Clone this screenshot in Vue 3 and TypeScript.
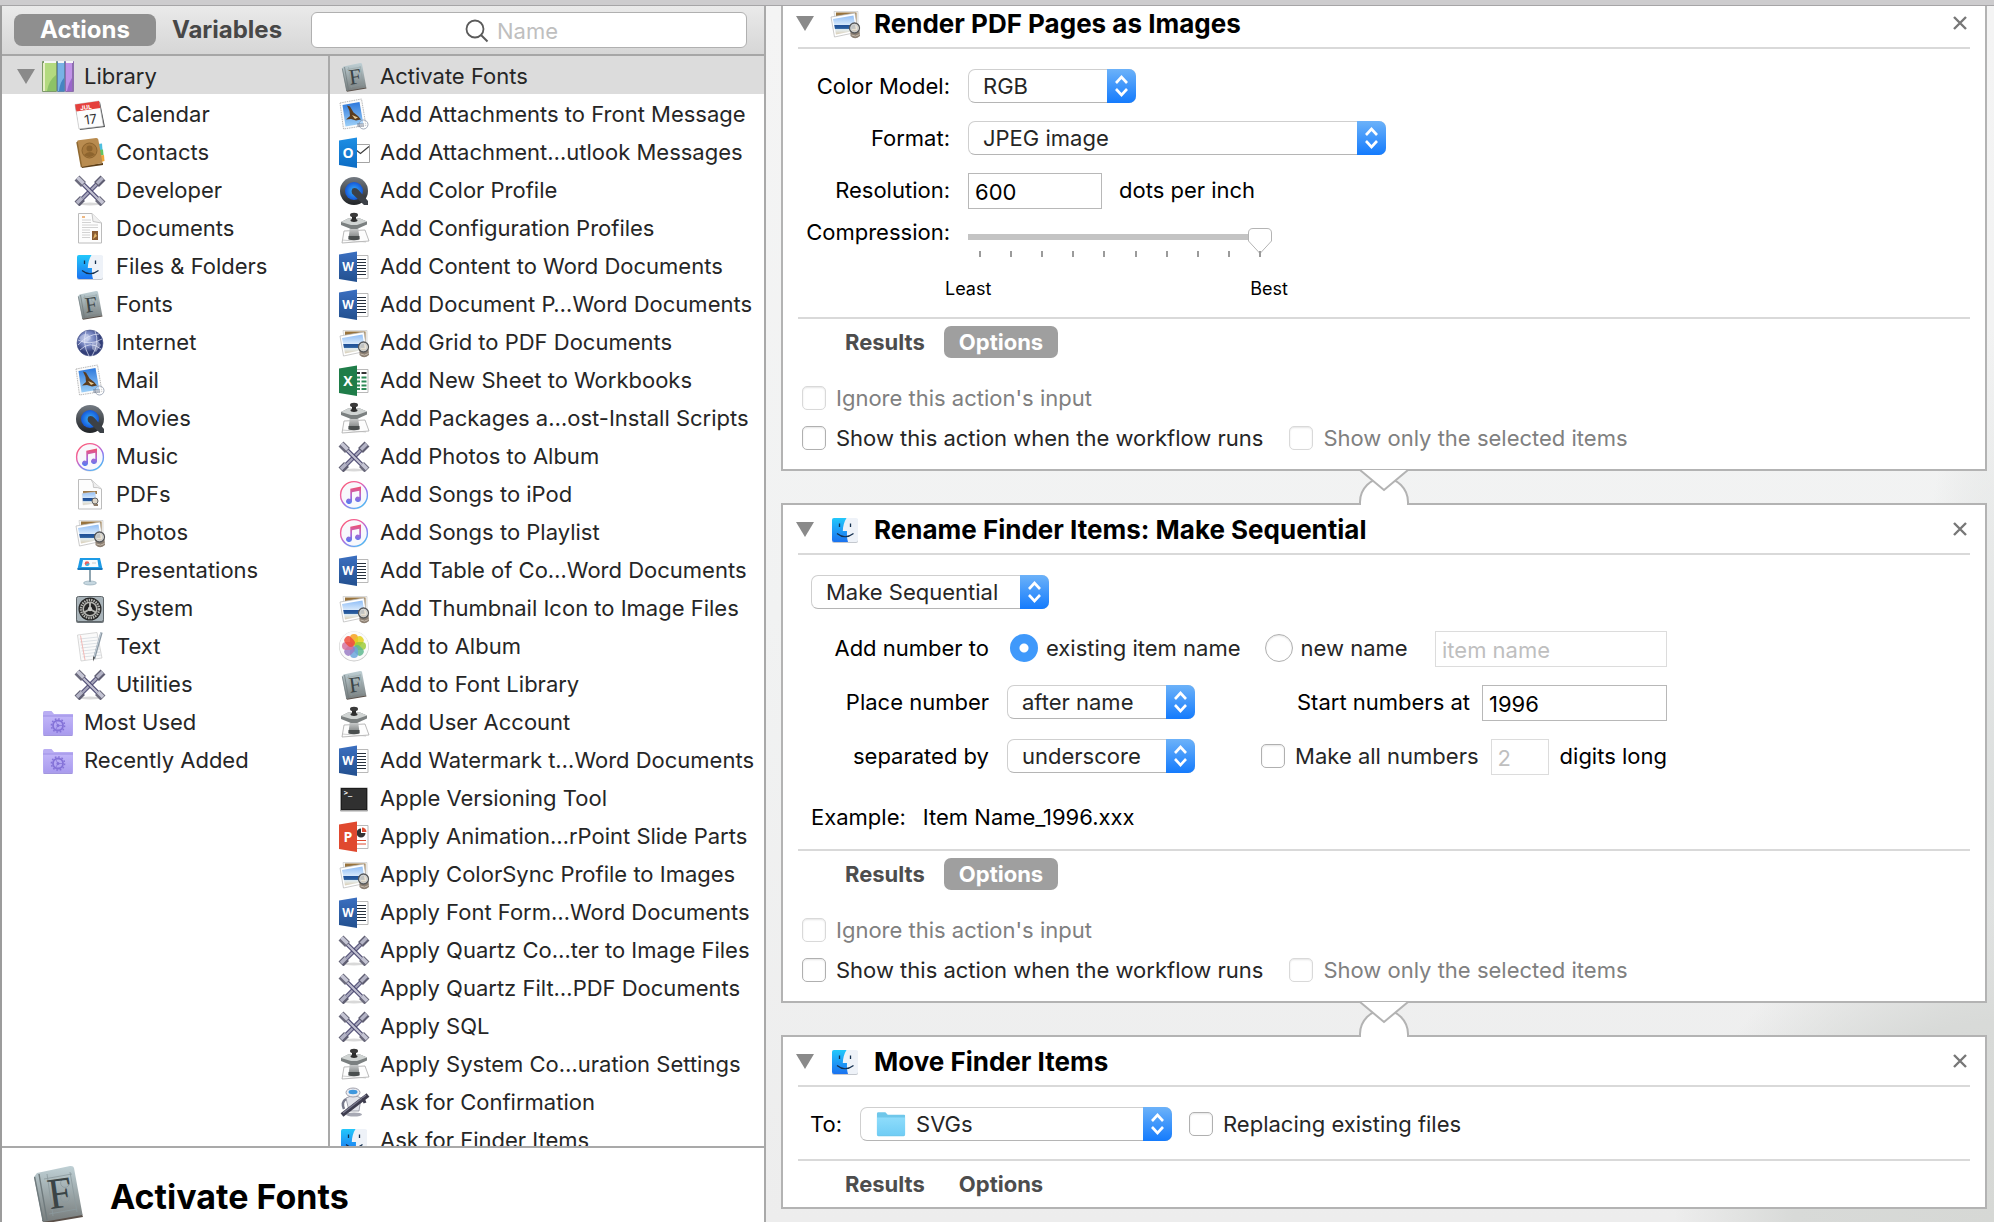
<script setup lang="ts">
import { h, ref } from 'vue'

interface Entry {
  icon: string
  label: string
}

interface Glyph {
  text: string
  x: number
  y: number
  size: number
  family: string
  weight: number
  fill: string
  tilt: number
}

const office = 'Open Sans, sans-serif'

const glyphs: Record<string, Glyph[]> = {
  calendar: [
    { text: 'JUL', x: 13, y: 11, size: 6, family: 'Inter, sans-serif', weight: 700, fill: '#fff', tilt: -8 },
    { text: '17', x: 16, y: 26, size: 13, family: 'Inter, sans-serif', weight: 400, fill: '#333', tilt: -8 },
  ],
  fontbook: [{ text: 'F', x: 17, y: 24, size: 22, family: 'Liberation Serif, serif', weight: 400, fill: '#3b4446', tilt: -8 }],
  outlook: [{ text: 'O', x: 10, y: 22, size: 14, family: office, weight: 700, fill: '#fff', tilt: 0 }],
  word: [{ text: 'W', x: 10, y: 21, size: 12, family: office, weight: 700, fill: '#fff', tilt: 0 }],
  excel: [{ text: 'X', x: 10, y: 22, size: 14, family: office, weight: 700, fill: '#fff', tilt: 0 }],
  powerpoint: [{ text: 'P', x: 10, y: 22, size: 14, family: office, weight: 700, fill: '#fff', tilt: 0 }],
  terminal: [{ text: '>_', x: 10, y: 13, size: 7, family: 'DejaVu Sans Mono, monospace', weight: 700, fill: '#fff', tilt: 0 }],
}

// Artwork comes from the sprite; lettering is laid over it per icon.
const AppIcon = (props: { name: string }) =>
  h('svg', { viewBox: '0 0 32 32', 'aria-hidden': 'true' }, [
    h('use', { href: `#i-${props.name}`, width: 32, height: 32 }),
    ...(glyphs[props.name] ?? []).map((g) =>
      h(
        'text',
        {
          x: g.x,
          y: g.y,
          'font-size': g.size,
          'font-family': g.family,
          'font-weight': g.weight,
          fill: g.fill,
          'text-anchor': 'middle',
          transform: `rotate(${g.tilt} 16 17)`,
        },
        g.text,
      ),
    ),
  ])
AppIcon.props = ['name']

const categories: Entry[] = [
  { icon: 'calendar', label: 'Calendar' },
  { icon: 'contacts', label: 'Contacts' },
  { icon: 'tools', label: 'Developer' },
  { icon: 'document', label: 'Documents' },
  { icon: 'finder', label: 'Files & Folders' },
  { icon: 'fontbook', label: 'Fonts' },
  { icon: 'globe', label: 'Internet' },
  { icon: 'mail', label: 'Mail' },
  { icon: 'quicktime', label: 'Movies' },
  { icon: 'music', label: 'Music' },
  { icon: 'pdf', label: 'PDFs' },
  { icon: 'preview', label: 'Photos' },
  { icon: 'keynote', label: 'Presentations' },
  { icon: 'system', label: 'System' },
  { icon: 'text', label: 'Text' },
  { icon: 'tools', label: 'Utilities' },
]

const smartGroups: Entry[] = [
  { icon: 'smart', label: 'Most Used' },
  { icon: 'smart', label: 'Recently Added' },
]

const actions: Entry[] = [
  { icon: 'fontbook', label: 'Activate Fonts' },
  { icon: 'mail', label: 'Add Attachments to Front Message' },
  { icon: 'outlook', label: 'Add Attachment…utlook Messages' },
  { icon: 'quicktime', label: 'Add Color Profile' },
  { icon: 'stamp', label: 'Add Configuration Profiles' },
  { icon: 'word', label: 'Add Content to Word Documents' },
  { icon: 'word', label: 'Add Document P…Word Documents' },
  { icon: 'preview', label: 'Add Grid to PDF Documents' },
  { icon: 'excel', label: 'Add New Sheet to Workbooks' },
  { icon: 'stamp', label: 'Add Packages a…ost-Install Scripts' },
  { icon: 'tools', label: 'Add Photos to Album' },
  { icon: 'music', label: 'Add Songs to iPod' },
  { icon: 'music', label: 'Add Songs to Playlist' },
  { icon: 'word', label: 'Add Table of Co…Word Documents' },
  { icon: 'preview', label: 'Add Thumbnail Icon to Image Files' },
  { icon: 'photos', label: 'Add to Album' },
  { icon: 'fontbook', label: 'Add to Font Library' },
  { icon: 'stamp', label: 'Add User Account' },
  { icon: 'word', label: 'Add Watermark t…Word Documents' },
  { icon: 'terminal', label: 'Apple Versioning Tool' },
  { icon: 'powerpoint', label: 'Apply Animation…rPoint Slide Parts' },
  { icon: 'preview', label: 'Apply ColorSync Profile to Images' },
  { icon: 'word', label: 'Apply Font Form…Word Documents' },
  { icon: 'tools', label: 'Apply Quartz Co…ter to Image Files' },
  { icon: 'tools', label: 'Apply Quartz Filt…PDF Documents' },
  { icon: 'tools', label: 'Apply SQL' },
  { icon: 'stamp', label: 'Apply System Co…uration Settings' },
  { icon: 'automator', label: 'Ask for Confirmation' },
  { icon: 'finder', label: 'Ask for Finder Items' },
]

const petals = [
  { angle: 0, color: '#f6a21d' },
  { angle: 45, color: '#e3d11f' },
  { angle: 90, color: '#9ccb3b' },
  { angle: 135, color: '#5fb98f' },
  { angle: 180, color: '#6ba6dc' },
  { angle: 225, color: '#9a7cc4' },
  { angle: 270, color: '#d5729f' },
  { angle: 315, color: '#ee4d3c' },
]

const selectedAction = ref(0)
const quality = ref(9)
const resolution = ref('600')
const startNumber = ref('1996')
const digits = ref('2')
const target = ref('existing')
</script>

<template>
  <svg class="sprite" width="0" height="0" aria-hidden="true">
    <defs>
      <linearGradient id="g-finder" x2="0" y2="1"><stop stop-color="#22c8fb" /><stop offset="1" stop-color="#1b72f0" /></linearGradient>
      <linearGradient id="g-book" x2="0" y2="1"><stop stop-color="#bfd0d5" /><stop offset="1" stop-color="#777c7c" /></linearGradient>
      <linearGradient id="g-office-blue" x2="0" y2="1"><stop stop-color="#3b6fc0" /><stop offset="1" stop-color="#23508f" /></linearGradient>
      <linearGradient id="g-outlook" x2="0" y2="1"><stop stop-color="#1e8fe4" /><stop offset="1" stop-color="#0c6cc4" /></linearGradient>
      <linearGradient id="g-sky" x2="0" y2="1"><stop stop-color="#2d78dc" /><stop offset="1" stop-color="#9dd0f8" /></linearGradient>
      <linearGradient id="g-sea" x2="0" y2="1"><stop stop-color="#8fbdf6" /><stop offset=".48" stop-color="#d6e8fb" /><stop offset=".5" stop-color="#1f4f98" /><stop offset=".68" stop-color="#2a5e9e" /><stop offset=".74" stop-color="#e6f0f4" /><stop offset="1" stop-color="#d9cdb4" /></linearGradient>
      <linearGradient id="g-music" x1="0" y1="0" x2=".7" y2="1"><stop stop-color="#fb5a6c" /><stop offset=".4" stop-color="#ef62a6" /><stop offset=".65" stop-color="#9a70ee" /><stop offset="1" stop-color="#4bb8f6" /></linearGradient>
      <linearGradient id="g-note" x2="0" y2="1"><stop stop-color="#f2506a" /><stop offset=".5" stop-color="#b865cf" /><stop offset="1" stop-color="#4f7cf2" /></linearGradient>
      <linearGradient id="g-metal" x2="0" y2="1"><stop stop-color="#dfe1e1" /><stop offset="1" stop-color="#6e7272" /></linearGradient>
      <linearGradient id="g-ring" x2="0" y2="1"><stop stop-color="#737a82" /><stop offset="1" stop-color="#202326" /></linearGradient>
      <radialGradient id="g-globe" cx=".4" cy=".35"><stop stop-color="#b9c6ea" /><stop offset=".6" stop-color="#6d7cb8" /><stop offset="1" stop-color="#333f78" /></radialGradient>
      <radialGradient id="g-lens"><stop stop-color="#36b4ff" /><stop offset="1" stop-color="#1557d8" /></radialGradient>
      <linearGradient id="g-smart" x2="0" y2="1"><stop stop-color="#c0b4f8" /><stop offset="1" stop-color="#a99bee" /></linearGradient>
      <linearGradient id="g-folder" x2="0" y2="1"><stop stop-color="#8edcfb" /><stop offset="1" stop-color="#70cdf5" /></linearGradient>
    </defs>

    <symbol id="i-library" viewBox="0 0 32 32">
      <rect x="0" y="1" width="15" height="31" rx="1" fill="#7d9a6a" />
      <rect x="3" y="3" width="11" height="28" fill="#b3da7f" /><path d="M5 31Q7 20 14 15V31Z" fill="#8cc267" />
      <rect x="1" y="3" width="2" height="28" fill="#e9efc9" />
      <rect x="15" y="1" width="8" height="31" rx="1" fill="#5c86ad" />
      <rect x="16" y="3" width="6" height="28" fill="#79b2e6" /><path d="M17 31Q18 22 22 18V31Z" fill="#4684c2" />
      <rect x="23" y="1" width="9" height="31" rx="1" fill="#8d6fae" />
      <rect x="24" y="3" width="6" height="28" fill="#c193e8" /><path d="M25 31Q27 22 30 18V31Z" fill="#9a66cb" />
      <path d="M2 2H14M16 2H22M24 2H31" stroke="#f6f6f6" stroke-width="2" />
    </symbol>
    <symbol id="i-calendar" viewBox="0 0 32 32">
      <path d="M1 8 26 4 31 29 6 32Z" fill="#4d5052" />
      <path d="M1 6.500 25 3 29.500 28 5 31Z" fill="#fdfdfd" stroke="#b5b5b5" stroke-width=".6" />
      <path d="M1 6.500 25 3 26.300 10 2.400 13.600Z" fill="#e5403c" />
    </symbol>
    <symbol id="i-contacts" viewBox="0 0 32 32">
      <path d="M24 8 28 7.500 28.500 14 25 15Z" fill="#4fc0e0" /><path d="M25 14 29 13.500 29.500 19 26 20Z" fill="#62c462" /><path d="M26 19.500 30 19 30.500 25 27 26Z" fill="#f0a63c" />
      <path d="M7 30 29 27 29 29 8 32Z" fill="#5d3f18" />
      <path d="M3 6Q3 4.500 4.500 4.300L22 2Q24 1.800 24.300 3.500L28.500 27 7.500 31Z" fill="#b98c50" />
      <path d="M3 6 7.500 31" stroke="#8f6830" stroke-width="1.500" />
      <circle cx="15.500" cy="14.500" r="7.500" fill="#a87a3e" stroke="#8d642e" />
      <circle cx="15.500" cy="12.500" r="3" fill="#8d642e" /><path d="M10 19Q15.500 13.500 21 18.500 16 23 10 19Z" fill="#8d642e" />
    </symbol>
    <symbol id="i-tools" viewBox="0 0 32 32">
      <ellipse cx="16" cy="30" rx="11" ry="1.500" fill="#d9d9d9" />
      <path d="M26 7 6 27" stroke="#55527a" stroke-width="4.500" /><path d="M26 7 6 27" stroke="#a9a8bd" stroke-width="2.200" />
      <path d="M22.500 10.500 29 4M8.500 24.500 3 30" stroke="#5f5e72" stroke-width="7" /><path d="M23 9.500 28.500 4M8 24 3 29" stroke="#b4b4c6" stroke-width="3.500" />
      <path d="M6 7 26 27" stroke="#4b4870" stroke-width="4.500" /><path d="M6 7 26 27" stroke="#c3c2d2" stroke-width="2.200" />
      <path d="M9.500 10.500 3 4M23.500 24.500 29 30" stroke="#6b6a7c" stroke-width="7" /><path d="M9.500 9.500 3.500 3.500M24 24 29 29" stroke="#c5c5d4" stroke-width="3.500" />
    </symbol>
    <symbol id="i-document" viewBox="0 0 32 32">
      <path d="M4.500 1.500H18L27.500 11V31H4.500Z" fill="#fdfdfd" stroke="#bcbcbc" />
      <path d="M18 1.500 19 9.500 27.500 11" fill="#f0f0f0" stroke="#c6c6c6" />
      <path d="M8 5H11" stroke="#e8a15a" stroke-width="1.500" />
      <path d="M8 8H17M8 10.500H17M8 13H24M8 15.500H24M8 18H16M8 20.500H16M8 23H16M8 25.500H16" stroke="#d2d2d2" />
      <rect x="18" y="19" width="6" height="9" fill="#8a5d34" /><path d="M19 27 21 21 23 24Z" fill="#e1b56a" />
    </symbol>
    <symbol id="i-finder" viewBox="0 0 32 32">
      <rect x="3" y="6" width="26" height="24" rx="2" fill="#c4c8ce" />
      <rect x="3" y="5" width="26" height="24" rx="2" fill="#eef2f8" />
      <path d="M5 5H17.500C15 9 14 13 13.800 18H18C17.800 22 18 26 19 29H5Q3 29 3 27V7Q3 5 5 5Z" fill="url(#g-finder)" />
      <path d="M10.500 10.500V14M21.500 10.500V14" stroke="#14304f" stroke-width="1.300" fill="none" />
      <path d="M8 20.500Q16 27 24.500 20.500" stroke="#14304f" stroke-width="1.200" fill="none" />
    </symbol>
    <symbol id="i-fontbook" viewBox="0 0 32 32">
      <path d="M8 30 28 27 28.500 28.500 9 31.800Z" fill="#5a4f48" />
      <path d="M4 8.500 5.500 6.500 22 3Q23.800 2.800 24 4L28.300 27.500 8.500 31Z" fill="url(#g-book)" />
      <path d="M4.300 8.500 8.600 30.500M6.500 7 10.500 30" stroke="#6f7a7d" stroke-width=".7" fill="none" />
      <path d="M9 9.500 23 7M11.500 27 25 24.600M10.500 7 13.500 28M22 6 25.500 26" stroke="#8c999d" stroke-width=".4" fill="none" />
      <circle cx="19.500" cy="11.500" r="2.200" fill="none" stroke="#8c999d" stroke-width=".4" /><circle cx="19.500" cy="19" r="2.200" fill="none" stroke="#8c999d" stroke-width=".4" />
    </symbol>
    <symbol id="i-globe" viewBox="0 0 32 32">
      <circle cx="16" cy="17" r="13" fill="url(#g-globe)" stroke="#4c578c" stroke-width=".6" />
      <path d="M5 12Q9 7 14 8L17 12 12 17 8 16ZM18 17 24 15 27 19 22 26 18 23Z" fill="#dfe5f6" opacity=".45" />
      <path d="M4 14Q16 20 28 13M6 24Q16 14 27 23M12 5Q8 18 15 30M21 5Q26 17 18 30M4 19Q14 8 25 8" stroke="#e6ebfa" stroke-width=".7" fill="none" />
    </symbol>
    <symbol id="i-mail" viewBox="0 0 32 32">
      <path d="M2 5 23.500 1 28 27.500 5.500 31Z" fill="#fbfbfb" stroke="#b9b9b9" stroke-width="1" stroke-dasharray="1.500 .8" />
      <path d="M4.500 7 21.500 4 25.300 25.500 7.500 28.500Z" fill="url(#g-sky)" />
      <path d="M9 7.500 12 8.500 15.500 14.500 20 18 23 21.500 18 22.500 13 21 8 21.500 12 18 11.500 13Z" fill="#5b3c1e" /><path d="M14 17 20 19.500 17 21Z" fill="#e6c98f" />
      <circle cx="25.500" cy="26.500" r="4.500" fill="#fff" fill-opacity=".35" stroke="#8b97aa" stroke-width=".8" /><path d="M19 26H26M19 28H26" stroke="#5f6f88" stroke-width=".8" />
    </symbol>
    <symbol id="i-quicktime" viewBox="0 0 32 32">
      <circle cx="16" cy="17" r="14" fill="url(#g-ring)" />
      <circle cx="16" cy="17" r="9" fill="url(#g-lens)" />
      <path d="M14.500 14.500Q18 13 20.500 16L30 27V31H26L14 19.500Q13 16.500 14.500 14.500Z" fill="#3c4147" />
    </symbol>
    <symbol id="i-music" viewBox="0 0 32 32">
      <circle cx="16" cy="17.500" r="14" fill="#d8d8dc" />
      <circle cx="16" cy="17" r="13.400" fill="#f8f8fc" stroke="url(#g-music)" stroke-width="1.400" />
      <path d="M12.300 10.800 23 8.500V21.500A3 2.600 0 1 1 21.300 19V12.800L14 14.300V23.500A3 2.600 0 1 1 12.300 21Z" fill="url(#g-note)" />
    </symbol>
    <symbol id="i-pdf" viewBox="0 0 32 32">
      <path d="M4.500 1.500H17L27.500 11V31H4.500Z" fill="#fdfdfd" stroke="#bcbcbc" />
      <path d="M17 1.500Q20 5 19.500 9.500 24 9 27.500 11" fill="#eee" stroke="#c6c6c6" />
      <rect x="9" y="13" width="14" height="3" fill="#9c7a4c" />
      <path d="M8 15.500 21 14 23 25 9 27Z" fill="url(#g-sea)" stroke="#ddd" stroke-width=".5" />
      <circle cx="21" cy="23" r="3" fill="#ddd6c8" stroke="#666" /><path d="M19 26H24V28H20Z" fill="#8b7a66" />
    </symbol>
    <symbol id="i-preview" viewBox="0 0 32 32">
      <path d="M5 4.500H29V22L8 26Z" fill="#f7f7f5" stroke="#c2c2c2" stroke-width=".6" /><path d="M7 5.500H27.500V18H7Z" fill="#98733c" />
      <path d="M2 10 26 6 29 25 5.500 30Z" fill="#fff" stroke="#b5b5b5" stroke-width=".7" />
      <path d="M4 12 24.500 8.500 27 23.500 7 27.500Z" fill="url(#g-sea)" />
      <path d="M21.500 23H30.500L31 29Q26 33.500 21.500 29Z" fill="#8c7f72" />
      <circle cx="25.500" cy="21" r="5" fill="#e8ddcb" fill-opacity=".8" stroke="#55575a" stroke-width="1.300" /><circle cx="25.500" cy="21" r="3.600" fill="none" stroke="#c9cfd2" stroke-width="1" /><path d="M22.500 28Q26.500 30.500 30.500 27.500" stroke="#c6bbae" fill="none" />
    </symbol>
    <symbol id="i-keynote" viewBox="0 0 32 32">
      <ellipse cx="16" cy="29" rx="6.500" ry="2" fill="#c6d7e0" stroke="#8aa2b0" stroke-width=".6" />
      <path d="M16 15V28" stroke="#8fa4b0" stroke-width="2" />
      <path d="M6 4H26L28.500 15H3.500Z" fill="#1d9be6" /><path d="M3.500 14H28.500V16H3.500Z" fill="#1577bd" />
      <path d="M9 6H23.500L24.500 13H7.500Z" fill="#f8fbfd" />
      <circle cx="13" cy="9.500" r="2.300" fill="#f2605a" /><path d="M13 9.500H15.500A2.300 2.300 0 0 1 11.500 11.300Z" fill="#43b6e0" /><path d="M18 9H22" stroke="#ccc" />
    </symbol>
    <symbol id="i-system" viewBox="0 0 32 32">
      <rect x="2" y="5" width="28" height="26" rx="2" fill="#70777b" /><rect x="2.500" y="4.500" width="27" height="25" rx="2" fill="#a9b4ba" stroke="#60676b" />
      <circle cx="16" cy="17" r="11.500" fill="#252525" />
      <circle cx="16" cy="17" r="9" fill="none" stroke="#b4b4b0" stroke-width="2.400" stroke-dasharray="1.500 .9" />
      <circle cx="16" cy="17" r="6.800" fill="none" stroke="#b4b4b0" stroke-width="1.600" />
      <path d="M16 17V10M16 17 10 20.500M16 17 22 20.500" stroke="#b4b4b0" stroke-width="2" /><circle cx="16" cy="17" r="2.200" fill="#c9c9c6" />
    </symbol>
    <symbol id="i-text" viewBox="0 0 32 32">
      <path d="M3.500 5 23 2.500 28 28 7 31Z" fill="#fafafa" stroke="#c8c8c8" stroke-width=".7" />
      <path d="M5.500 9 24 7M6 12 24.500 10M6.500 15 25 13M7 18 25.500 16M7.500 21 26 19M8 24 26.500 22M8.500 27 27 25" stroke="#d5dbe0" stroke-width=".8" />
      <path d="M6.500 5.500 11 30" stroke="#f3aaa6" stroke-width=".8" />
      <path d="M27.500 2.500 20 29" stroke="#8b98a3" stroke-width="2.400" /><path d="M27 2.500 20 27" stroke="#c3ced8" stroke-width="1" /><path d="M21 27 19 31.500 19 26.500Z" fill="#555" />
    </symbol>
    <symbol id="i-smart" viewBox="0 0 32 32">
      <path d="M1 7Q1 5 2.500 5H9.500L12 8H31V28Q31 29.500 29.500 29.500H2.500Q1 29.500 1 28Z" fill="#b9adf3" />
      <path d="M1.500 10.500H30.500V28.500H1.500Z" fill="url(#g-smart)" /><path d="M1 10H31" stroke="#9f91e6" />
      <path d="M1.500 29.300H30.500" stroke="#9486d8" />
      <circle cx="16" cy="19.500" r="5" fill="none" stroke="#8472d8" stroke-width="1.800" /><circle cx="16" cy="19.500" r="6.600" fill="none" stroke="#8472d8" stroke-width="1.500" stroke-dasharray="1.700 1.750" />
      <circle cx="16" cy="19.500" r="1.500" fill="#8472d8" /><path d="M16 19.500H20M16 19.500 14 16M16 19.500 14 23" stroke="#8472d8" stroke-width=".8" />
    </symbol>
    <symbol id="i-outlook" viewBox="0 0 32 32">
      <path d="M18 8.500H31.500V26.500H18Z" fill="#fff" stroke="#a4a4a4" /><path d="M18 14 22.500 17.500 31 10.500" fill="none" stroke="#3c3c3c" stroke-width="1.200" />
      <path d="M1 4.500 19 1.500V32L1 29Z" fill="url(#g-outlook)" />
    </symbol>
    <symbol id="i-word" viewBox="0 0 32 32">
      <path d="M18 5.500H30V28.500H18Z" fill="#fff" stroke="#b9b9b9" /><path d="M19 9.500H28M19 12.500H28M19 15.500H28M19 18.500H28M19 21.500H28M19 24.500H28" stroke="#27303c" />
      <path d="M1 4.500 19 1.500V32L1 29Z" fill="url(#g-office-blue)" />
    </symbol>
    <symbol id="i-excel" viewBox="0 0 32 32">
      <path d="M18 5.500H30V28.500H18Z" fill="#fff" stroke="#b9b9b9" /><path d="M19 9H22M23.500 9H28.500" stroke="#333" stroke-width="2" /><path d="M19 13.500H22M23.500 13.500H28.500M19 17.500H22M23.500 17.500H28.500M19 21.500H22M23.500 21.500H28.500M19 25H22M23.500 25H28.500" stroke="#2c8a57" stroke-width="2" />
      <path d="M1 4.500 19 1.500V32L1 29Z" fill="#1f7d49" />
    </symbol>
    <symbol id="i-powerpoint" viewBox="0 0 32 32">
      <path d="M18 5.500H30V28.500H18Z" fill="#fff" stroke="#b9b9b9" /><path d="M23 13V8.500A4.500 4.500 0 1 0 27.500 13Z" fill="#333" /><path d="M24 12V7.500A4.500 4.500 0 0 1 28.500 12Z" fill="#dd4b31" /><path d="M19 20.500H28M19 24H28" stroke="#dd4b31" />
      <path d="M1 4.500 19 1.500V32L1 29Z" fill="#e0492f" />
    </symbol>
    <symbol id="i-stamp" viewBox="0 0 32 32">
      <path d="M6 19 27 18 31 29 4 31Z" fill="#fdfdfd" stroke="#a9a9a9" stroke-width=".8" /><path d="M4 28 28 30" stroke="#bbb" stroke-width=".7" />
      <path d="M12 14H20L21.500 27Q16 29 10.500 27Z" fill="url(#g-metal)" /><path d="M10.500 24H21.500V27.500Q16 29 10.500 27.500Z" fill="#4a4f4f" />
      <path d="M3 10 10 6.500H22L29 9.500V12.500L19 17H13L3 13Z" fill="#7b8080" /><path d="M3 10 10 6.500H22L29 9.500 19 13H13Z" fill="#d0d4d3" />
      <path d="M14 4H18V8.500H14Z" fill="#2b2b2b" /><ellipse cx="16" cy="3" rx="4" ry="2.200" fill="#3a3a3a" /><ellipse cx="16" cy="8.500" rx="3.500" ry="1.400" fill="#303030" />
    </symbol>
    <symbol id="i-photos" viewBox="0 0 32 32">
      <circle cx="16" cy="16.500" r="15" fill="#c9c9c9" /><circle cx="16" cy="16" r="14.500" fill="#fbfbfb" />
      <rect v-for="p in petals" :key="p.angle" x="12" y="4" width="8" height="11.500" rx="4" :fill="p.color" fill-opacity=".85" :transform="`rotate(${p.angle} 16 16)`" />
    </symbol>
    <symbol id="i-terminal" viewBox="0 0 32 32">
      <rect x="2" y="5.500" width="28" height="24" rx="1" fill="#a5a5a5" /><rect x="3" y="6" width="26" height="22" fill="#1d1d1d" /><rect x="4" y="7" width="24" height="20" fill="#303030" />
    </symbol>
    <symbol id="i-automator" viewBox="0 0 32 32">
      <ellipse cx="16" cy="28.500" rx="8" ry="2" fill="#a7a9b4" />
      <path d="M8 12Q16 8 23 12L21 25H11Z" fill="#e3e4ea" stroke="#8b8d9b" stroke-width=".8" />
      <path d="M8 13Q3 16 6 23" stroke="#77798a" stroke-width="2.500" fill="none" /><ellipse cx="15" cy="6.500" rx="7" ry="4.500" fill="#ececf1" stroke="#8b8d9b" stroke-width=".8" /><ellipse cx="15" cy="6" rx="4.500" ry="2.200" fill="#3f97dd" />
      <path d="M4 29 30 9" stroke="#3e3d4e" stroke-width="4.500" /><path d="M5 27 28 9" stroke="#7d7c90" stroke-width="1.200" /><path d="M25 12 27 17" stroke="#3e3d4e" stroke-width="3" />
    </symbol>
    <symbol id="i-folder" viewBox="0 0 32 32">
      <path d="M1 5Q1 3.500 2.500 3.500H10L12.500 6H30Q31 6 31 7V27.500Q31 29 29.500 29H2.500Q1 29 1 27.500Z" fill="#6fc7ea" />
      <path d="M1 9H31V27Q31 28 30 28H2Q1 28 1 27Z" fill="url(#g-folder)" />
    </symbol>
  </svg>

  <div class="window">
    <div class="titlebar-edge"></div>
    <div class="panes">
      <aside class="library">
        <div class="toolbar">
          <button type="button" class="tab active">Actions</button>
          <button type="button" class="tab">Variables</button>
          <label class="search">
            <svg width="24" height="24" viewBox="0 0 24 24" aria-hidden="true"><circle cx="10" cy="10" r="8.500" fill="none" stroke="#5a5a5a" stroke-width="1.800" /><path d="M16 16 22.500 22.500" stroke="#5a5a5a" stroke-width="2" /></svg>
            <input type="search" placeholder="Name" aria-label="Name" />
          </label>
        </div>

        <div class="columns">
          <ul class="categories">
            <li>
              <button type="button" class="entry root selected">
                <svg class="disclosure" viewBox="0 0 18 15"><path d="M0 0H18L9 15Z" /></svg>
                <AppIcon class="icon" name="library" />Library
              </button>
            </li>
            <li v-for="c in categories" :key="c.label">
              <button type="button" class="entry child"><AppIcon class="icon" :name="c.icon" />{{ c.label }}</button>
            </li>
            <li v-for="g in smartGroups" :key="g.label">
              <button type="button" class="entry group"><AppIcon class="icon" :name="g.icon" />{{ g.label }}</button>
            </li>
          </ul>
          <ul class="actions">
            <li v-for="(a, i) in actions" :key="a.label">
              <button type="button" class="entry action" :class="{ selected: i === selectedAction }" @click="selectedAction = i">
                <AppIcon class="icon" :name="a.icon" />{{ a.label }}
              </button>
            </li>
          </ul>
        </div>

        <section class="details">
          <AppIcon class="details-icon" name="fontbook" />
          <h1>Activate Fonts</h1>
        </section>
      </aside>

      <main class="workflow">
        <section class="card first">
          <header>
            <svg class="disclosure" viewBox="0 0 18 15"><path d="M0 0H18L9 15Z" /></svg>
            <AppIcon class="icon" name="preview" />
            <h2>Render PDF Pages as Images</h2>
            <button type="button" class="close" aria-label="Remove"><svg width="14" height="14" viewBox="0 0 14 14"><path d="M1 1 13 13M13 1 1 13" /></svg></button>
          </header>
          <div class="body render">
            <div class="row">
              <label class="name" for="color-model">Color Model:</label>
              <span class="popup w-color"><select id="color-model"><option>RGB</option></select><svg viewBox="0 0 29 34"><path d="M9 14 14.500 8 20 14M9 20 14.500 26 20 20" /></svg></span>
            </div>
            <div class="row">
              <label class="name" for="format">Format:</label>
              <span class="popup w-format"><select id="format"><option>JPEG image</option></select><svg viewBox="0 0 29 34"><path d="M9 14 14.500 8 20 14M9 20 14.500 26 20 20" /></svg></span>
            </div>
            <div class="row">
              <label class="name" for="resolution">Resolution:</label>
              <input id="resolution" v-model="resolution" class="field w-res" type="text" />
              <span class="unit">dots per inch</span>
            </div>
            <div class="row compression">
              <label class="name" for="quality">Compression:</label>
              <div class="slider">
                <input id="quality" v-model="quality" type="range" min="0" max="9" />
                <div class="ticks"><i v-for="n in 10" :key="n"></i></div>
                <div class="ends"><span>Least</span><span>Best</span></div>
              </div>
            </div>
          </div>
          <footer>
            <div class="tabs"><button type="button" class="pill">Results</button><button type="button" class="pill on">Options</button></div>
            <div class="options">
              <label class="check dim"><input type="checkbox" disabled />Ignore this action's input</label>
              <div class="pair">
                <label class="check"><input type="checkbox" />Show this action when the workflow runs</label>
                <label class="check dim"><input type="checkbox" disabled />Show only the selected items</label>
              </div>
            </div>
          </footer>
        </section>

        <div class="link"><svg viewBox="0 0 50 36"><path class="dome" d="M1 36V33A24 24 0 0 1 49 33V36" /><path class="arrow" d="M0 1H1L25 21 49 1H50" /></svg></div>

        <section class="card">
          <header>
            <svg class="disclosure" viewBox="0 0 18 15"><path d="M0 0H18L9 15Z" /></svg>
            <AppIcon class="icon" name="finder" />
            <h2>Rename Finder Items: Make Sequential</h2>
            <button type="button" class="close" aria-label="Remove"><svg width="14" height="14" viewBox="0 0 14 14"><path d="M1 1 13 13M13 1 1 13" /></svg></button>
          </header>
          <div class="body rename">
            <span class="popup w-mode"><select aria-label="Rename mode"><option>Make Sequential</option></select><svg viewBox="0 0 29 34"><path d="M9 14 14.500 8 20 14M9 20 14.500 26 20 20" /></svg></span>
            <div class="row">
              <span class="name">Add number to</span>
              <label class="check radio"><input v-model="target" type="radio" name="target" value="existing" />existing item name</label>
              <label class="check radio"><input v-model="target" type="radio" name="target" value="new" />new name</label>
              <input class="field faded w-item push" type="text" placeholder="item name" aria-label="item name" disabled />
            </div>
            <div class="row">
              <label class="name" for="place">Place number</label>
              <span class="popup w-place"><select id="place"><option>after name</option></select><svg viewBox="0 0 29 34"><path d="M9 14 14.500 8 20 14M9 20 14.500 26 20 20" /></svg></span>
              <label class="push" for="start">Start numbers at</label>
              <input id="start" v-model="startNumber" class="field w-start" type="text" />
            </div>
            <div class="row">
              <label class="name" for="separator">separated by</label>
              <span class="popup w-place"><select id="separator"><option>underscore</option></select><svg viewBox="0 0 29 34"><path d="M9 14 14.500 8 20 14M9 20 14.500 26 20 20" /></svg></span>
              <label class="check push"><input type="checkbox" />Make all numbers</label>
              <input id="digits" v-model="digits" class="field faded w-digits" type="text" disabled />
              <label class="suffix" for="digits">digits long</label>
            </div>
            <p class="example"><span>Example:</span><span>Item Name_1996.xxx</span></p>
          </div>
          <footer>
            <div class="tabs"><button type="button" class="pill">Results</button><button type="button" class="pill on">Options</button></div>
            <div class="options">
              <label class="check dim"><input type="checkbox" disabled />Ignore this action's input</label>
              <div class="pair">
                <label class="check"><input type="checkbox" />Show this action when the workflow runs</label>
                <label class="check dim"><input type="checkbox" disabled />Show only the selected items</label>
              </div>
            </div>
          </footer>
        </section>

        <div class="link"><svg viewBox="0 0 50 36"><path class="dome" d="M1 36V33A24 24 0 0 1 49 33V36" /><path class="arrow" d="M0 1H1L25 21 49 1H50" /></svg></div>

        <section class="card">
          <header>
            <svg class="disclosure" viewBox="0 0 18 15"><path d="M0 0H18L9 15Z" /></svg>
            <AppIcon class="icon" name="finder" />
            <h2>Move Finder Items</h2>
            <button type="button" class="close" aria-label="Remove"><svg width="14" height="14" viewBox="0 0 14 14"><path d="M1 1 13 13M13 1 1 13" /></svg></button>
          </header>
          <div class="body move">
            <label for="dest">To:</label>
            <span class="popup foldered w-dest"><AppIcon class="folder" name="folder" /><select id="dest"><option>SVGs</option></select><svg viewBox="0 0 29 34"><path d="M9 14 14.500 8 20 14M9 20 14.500 26 20 20" /></svg></span>
            <label class="check"><input type="checkbox" />Replacing existing files</label>
          </div>
          <footer>
            <div class="tabs"><button type="button" class="pill">Results</button><button type="button" class="pill">Options</button></div>
          </footer>
        </section>
      </main>
    </div>
  </div>
</template>

<style>
body {
  margin: 0;
  overflow: hidden;
}
</style>

<style scoped>
.sprite {
  position: absolute;
}
.window {
  display: flex;
  flex-direction: column;
  height: 100vh;
  font-family: Inter, "Liberation Sans", sans-serif;
  font-size: 22px;
  line-height: 34px;
  color: #000;
}
.window * {
  box-sizing: border-box;
}
button,
input,
select {
  font: inherit;
  color: inherit;
  margin: 0;
}
button {
  border: 0;
  padding: 0;
  background: none;
}
.titlebar-edge {
  flex: none;
  height: 6px;
  background: #cdccce;
  border-bottom: 1px solid #a6a5a7;
}
.panes {
  flex: 1;
  min-height: 0;
  display: flex;
}
.library {
  flex: none;
  width: 766px;
  display: flex;
  flex-direction: column;
  background: #fff;
  border-left: 2px solid #9c9c9c;
  border-right: 2px solid #a9a9a9;
}
.toolbar {
  flex: none;
  height: 50px;
  display: flex;
  align-items: center;
  padding: 0 17px 0 12px;
  background: linear-gradient(#eaeaea, #d6d6d6);
  border-bottom: 2px solid #a6a6a6;
}
.tab {
  height: 32px;
  width: 142px;
  border-radius: 8px;
  font-size: 24px;
  line-height: 32px;
  font-weight: 700;
  color: #474747;
}
.tab.active {
  background: #8f8f8f;
  color: #fff;
}
.search {
  margin-left: 13px;
  flex: 1;
  height: 36px;
  display: flex;
  align-items: center;
  justify-content: center;
  gap: 8px;
  padding-top: 2px;
  background: #fff;
  border: 1px solid #b0b0b0;
  border-radius: 6px;
}
.search input {
  width: 96px;
  height: 32px;
  border: 0;
  padding: 0;
  outline: 0;
  background: none;
}
.search input::placeholder {
  color: #bfbfbf;
}
.columns {
  flex: 1;
  min-height: 0;
  display: flex;
  overflow: hidden;
}
ul {
  list-style: none;
  margin: 0;
  padding: 0;
}
.categories {
  flex: none;
  width: 328px;
  border-right: 2px solid #a9a9a9;
}
.actions {
  flex: 1;
}
.entry {
  display: flex;
  align-items: center;
  width: 100%;
  height: 38px;
  padding-top: 2px;
  color: #262626;
  text-align: left;
  white-space: nowrap;
}
.entry.selected {
  background: #dcdcdc;
}
.icon {
  flex: none;
  width: 32px;
  height: 32px;
  margin-right: 10px;
}
.entry.root {
  padding-left: 15px;
}
.entry.root .disclosure {
  margin-right: 7px;
}
.entry.child {
  padding-left: 72px;
}
.entry.group {
  padding-left: 40px;
}
.entry.action {
  padding-left: 8px;
}
.disclosure {
  flex: none;
  width: 18px;
  height: 15px;
  fill: #8a8a8a;
}
.details {
  flex: none;
  height: 76px;
  overflow: hidden;
  display: flex;
  gap: 20px;
  padding: 12px 24px 0;
  border-top: 2px solid #a9a9a9;
}
.details-icon {
  flex: none;
  width: 64px;
  height: 64px;
}
.details h1 {
  margin: 16px 0 0;
  font-size: 34px;
  line-height: 42px;
  font-weight: 700;
}

.workflow {
  flex: 1;
  min-width: 0;
  overflow: hidden;
  padding: 0 7px 0 15px;
  background:
    radial-gradient(circle at 100% 100%, #d6d8d5 0, #d8dad8 200px, rgba(216, 218, 216, 0) 320px),
    radial-gradient(ellipse 80px 480px at 100% 66%, #dbdedd 0, rgba(219, 222, 221, 0) 100%),
    linear-gradient(#f4f4f4, #f1f2f2 50%, #ededed);
}
.card {
  background: #fff;
  border: 2px solid #b3b3b3;
}
.card.first {
  margin-top: -9px;
}
.card header {
  height: 50px;
  margin: 0 15px;
  display: flex;
  align-items: center;
  border-bottom: 2px solid #d9d9d9;
}
.card header .disclosure {
  margin-left: -2px;
}
.card header .icon {
  margin: 0 13px 0 15px;
}
.card h2 {
  flex: 1;
  margin: 0;
  padding-top: 2px;
  font-size: 26px;
  line-height: 34px;
  font-weight: 700;
}
.close {
  width: 20px;
  height: 34px;
  line-height: 0;
}
.close path {
  stroke: #777;
  stroke-width: 2.4;
}
.body {
  margin: 0 15px;
  border-bottom: 2px solid #d9d9d9;
  display: flex;
  flex-direction: column;
}
.row {
  display: flex;
  align-items: flex-start;
}
.name {
  flex: none;
  text-align: right;
  margin-right: 18px;
  white-space: nowrap;
}
.render {
  padding: 20px 0 15px;
  gap: 18px;
}
.render .name {
  width: 152px;
}
.unit {
  margin-left: 17px;
}
.compression {
  margin-top: -12px;
}
.popup {
  position: relative;
  display: block;
  flex: none;
  height: 34px;
}
.popup select {
  appearance: none;
  width: 100%;
  height: 34px;
  padding: 0 32px 0 14px;
  border: 1px solid #cfcfcf;
  border-bottom-color: #b5b5b5;
  border-radius: 7px;
  background: #fff;
  color: #262626;
  line-height: 30px;
}
.popup > svg:last-child {
  position: absolute;
  right: 0;
  top: 0;
  width: 29px;
  height: 34px;
  border-radius: 0 7px 7px 0;
  background: linear-gradient(#6cb2f9, #147bfd);
  fill: none;
  stroke: #fff;
  stroke-width: 2.6;
  pointer-events: none;
}
.foldered select {
  padding-left: 55px;
}
.folder {
  position: absolute;
  left: 15px;
  top: 2px;
  width: 32px;
  height: 30px;
}
.w-color {
  width: 168px;
}
.w-format {
  width: 418px;
}
.w-mode {
  width: 238px;
}
.w-place {
  width: 188px;
}
.w-dest {
  width: 312px;
}
.field {
  height: 36px;
  padding: 2px 6px 0;
  border: 1px solid #b8b8b8;
  border-radius: 0;
  background: #fff;
  flex: none;
  outline: 0;
}
.field.faded {
  border-color: #dcdcdc;
  color: #bfbfbf;
}
.field::placeholder {
  color: #bfbfbf;
}
.w-res {
  width: 134px;
}
.w-item {
  width: 232px;
}
.w-start {
  width: 185px;
}
.w-digits {
  width: 58px;
}
.slider {
  width: 304px;
  padding-top: 13px;
}
.slider input {
  appearance: none;
  display: block;
  width: 304px;
  height: 26px;
  background: linear-gradient(#c4c4c4, #c4c4c4) 0 6px / 290px 6px no-repeat;
}
.slider input::-webkit-slider-thumb {
  appearance: none;
  width: 24px;
  height: 26px;
  background: url("data:image/svg+xml,%3Csvg xmlns='http://www.w3.org/2000/svg' viewBox='0 0 24 26'%3E%3Cpath d='M12 25.500 .500 13V5Q.500 .500 5 .500H19Q23.500 .500 23.500 5V13Z' fill='%23fff' stroke='%23b4b4b4'/%3E%3C/svg%3E") no-repeat;
}
.ticks {
  display: flex;
  justify-content: space-between;
  padding: 0 11px;
  margin-top: -3px;
}
.ticks i {
  width: 2px;
  height: 6px;
  background: #9b9b9b;
}
.ends {
  display: flex;
  justify-content: space-between;
  margin: 19px -16px 0 -23px;
  font-size: 18px;
  line-height: 26px;
}

.card footer {
  padding: 7px 15px;
}
.tabs {
  display: flex;
  gap: 4px;
  padding-left: 32px;
}
.pill {
  height: 32px;
  padding: 0 15px;
  border-radius: 7px;
  line-height: 32px;
  font-weight: 700;
  color: #4d4d4d;
}
.pill.on {
  background: #9f9f9f;
  color: #fff;
}
.options {
  padding: 20px 4px 4px;
}
.options .check {
  height: 40px;
}
.pair {
  display: flex;
  gap: 26px;
}
.check {
  display: flex;
  align-items: center;
  gap: 10px;
  height: 34px;
  color: #262626;
  white-space: nowrap;
}
.check.dim {
  color: #808080;
}
.check input {
  appearance: none;
  flex: none;
  width: 24px;
  height: 24px;
  border: 1px solid #b0b0b0;
  border-radius: 5px;
  background: #fff;
  box-shadow: inset 0 1px 2px #e4e4e4;
}
.check.dim input {
  border-color: #d9d9d9;
}
.radio {
  gap: 8px;
  margin: 0 21px 0 3px;
}
.radio input {
  width: 28px;
  height: 28px;
  border-radius: 50%;
}
.radio input:checked {
  border: 0;
  box-shadow: none;
  background: radial-gradient(circle, #fff 4px, #3f99fb 5px);
}

.rename {
  padding: 20px 0 15px;
  gap: 18px;
}
.rename .w-mode {
  margin: 0 0 4px 13px;
}
.rename .row {
  width: 869px;
}
.rename .name {
  width: 191px;
}
.push {
  margin-left: auto;
}
.rename .field {
  margin-left: 12px;
}
.rename .field.push {
  margin-left: auto;
}
.suffix {
  margin-left: 11px;
}
.example {
  margin: 7px 0 0 13px;
  display: flex;
  gap: 17px;
}
.move {
  flex-direction: row;
  align-items: center;
  padding: 20px 0 18px 12px;
}
.move .popup {
  margin: 0 17px 0 18px;
}
.link {
  height: 32px;
  display: flex;
  justify-content: center;
}
.link svg {
  position: relative;
  flex: none;
  width: 50px;
  height: 36px;
  margin-top: -2px;
}
.link path {
  fill: #fff;
  stroke: #b3b3b3;
  stroke-width: 2;
}
</style>
